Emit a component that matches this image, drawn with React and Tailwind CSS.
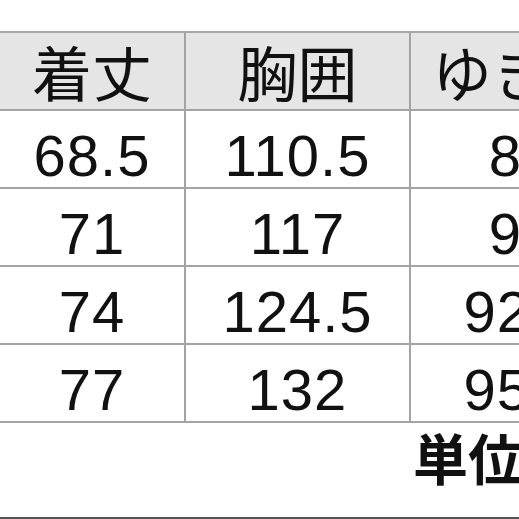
const rows = [
  ['68.5', '110.5', '84'],
  ['71', '117', '90'],
  ['74', '124.5', '92.5'],
  ['77', '132', '95.5'],
];

const cols = ['w-[186px]', 'w-[225px]', 'w-[222px]'];

function Cell({ children, idx, header }) {
  return (
    <div
      className={`${cols[idx]} shrink-0 flex items-center justify-center whitespace-nowrap ${
        idx < 2 ? 'border-r-2 border-[#a3a3a3]' : ''
      } ${header ? 'bg-[#e5e5e5] pt-[12px] text-[60px]' : 'bg-white pt-[14px] text-[58px] tracking-[1px]'}`}
    >
      {children}
    </div>
  );
}

export default function App() {
  return (
    <div
      className="w-[519px] h-[519px] bg-white overflow-hidden flex flex-col text-[#111]"
      style={{ fontFamily: '"Liberation Sans", "Noto Sans CJK JP", sans-serif' }}
    >
      <div className="pt-[31px] w-[640px]">
        <div className="border-t-2 border-[#a8a8a8]">
          <div className="flex h-[78px] border-b-2 border-[#a3a3a3] leading-none">
            <Cell idx={0} header>着丈</Cell>
            <Cell idx={1} header>胸囲</Cell>
            <Cell idx={2} header>ゆき丈</Cell>
          </div>
          {rows.map((r, i) => (
            <div key={i} className="flex h-[78px] border-b-2 border-[#a3a3a3] leading-none">
              {r.map((v, j) => (
                <Cell key={j} idx={j}>{v}</Cell>
              ))}
            </div>
          ))}
        </div>
      </div>
      <div className="pl-[413px] pt-[11px] whitespace-nowrap text-[55px] font-bold leading-none">
        単位：cm
      </div>
      <div className="mt-auto h-[2px] bg-[#555]" />
    </div>
  );
}
